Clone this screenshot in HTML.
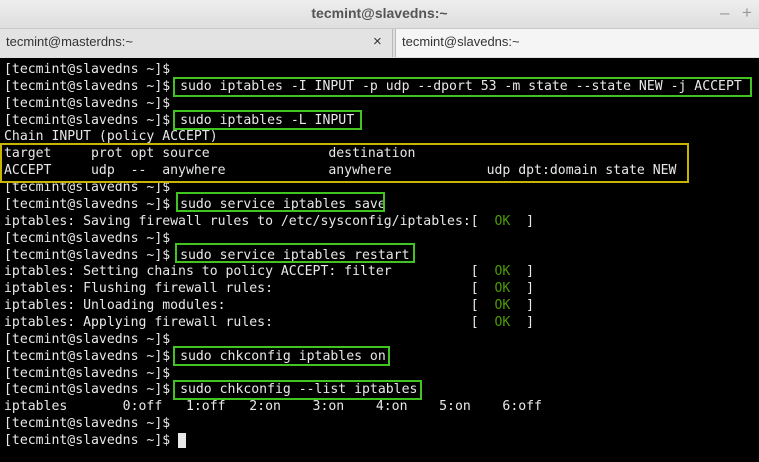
<!DOCTYPE html>
<html><head><style>
body{margin:0;width:759px;height:462px;overflow:hidden;background:#000;position:relative;font-family:"Liberation Sans",sans-serif}
#title{position:absolute;left:0;top:0;width:759px;height:28px;background:linear-gradient(#eeeeee,#dedede);border-bottom:1px solid #c8c8c8}
#title .t{position:absolute;left:0;right:0;top:5px;text-align:center;font-weight:bold;font-size:14px;color:#555}
#title .c{position:absolute;top:3px;font-size:17px;color:#999}
#tabs{position:absolute;left:0;top:29px;width:759px;height:29px;background:#e0e0e0}
.tab{position:absolute;top:0;height:28px;font-size:13px;color:#333;line-height:26px;padding-left:6px;box-sizing:border-box}
#term{position:absolute;left:0;top:58px;width:759px;height:404px;background:#000}
.l{position:absolute;left:4px;height:17px;line-height:17px;font-family:"DejaVu Sans Mono",monospace;font-size:13.15px;color:#e8e8e8;white-space:pre}
.ok{color:#4e9a06}
.c{margin-left:2px}
.b{position:absolute;border:2px solid #41c322;box-sizing:border-box}
.y{border-color:#c9b400}
</style></head><body>
<div id="title"><div class="t">tecmint@slavedns:~</div><span class="c" style="left:718px">–</span><span class="c" style="left:740px">+</span></div>
<div id="tabs">
<div class="tab" style="left:0;width:393px;background:#e3e3e3;border-right:1px solid #bbb">tecmint@masterdns:~<span style="position:absolute;left:373px;font-size:15px">×</span></div>
<div class="tab" style="left:395px;width:364px;background:#f5f5f5;border-left:1px solid #bbb">tecmint@slavedns:~</div>
</div>
<div id="term">
<div class="l" style="top:3px">[tecmint@slavedns ~]$</div>
<div class="l" style="top:19.9px">[tecmint@slavedns ~]$ <span class="c">sudo iptables -I INPUT -p udp --dport 53 -m state --state NEW -j ACCEPT</span></div>
<div class="l" style="top:36.7px">[tecmint@slavedns ~]$</div>
<div class="l" style="top:53.6px">[tecmint@slavedns ~]$ <span class="c">sudo iptables -L INPUT</span></div>
<div class="l" style="top:70.4px">Chain INPUT (policy ACCEPT)</div>
<div class="l" style="top:87.3px">target     prot opt source               destination</div>
<div class="l" style="top:104.2px">ACCEPT     udp  --  anywhere             anywhere            udp dpt:domain state NEW</div>
<div class="l" style="top:121px">[tecmint@slavedns ~]$</div>
<div class="l" style="top:137.9px">[tecmint@slavedns ~]$ <span class="c">sudo service iptables save</span></div>
<div class="l" style="top:154.7px">iptables: Saving firewall rules to /etc/sysconfig/iptables:[  <span class="ok">OK</span>  ]</div>
<div class="l" style="top:171.6px">[tecmint@slavedns ~]$</div>
<div class="l" style="top:188.5px">[tecmint@slavedns ~]$ <span class="c">sudo service iptables restart</span></div>
<div class="l" style="top:205.3px">iptables: Setting chains to policy ACCEPT: filter          [  <span class="ok">OK</span>  ]</div>
<div class="l" style="top:222.2px">iptables: Flushing firewall rules:                         [  <span class="ok">OK</span>  ]</div>
<div class="l" style="top:239px">iptables: Unloading modules:                               [  <span class="ok">OK</span>  ]</div>
<div class="l" style="top:255.9px">iptables: Applying firewall rules:                         [  <span class="ok">OK</span>  ]</div>
<div class="l" style="top:272.8px">[tecmint@slavedns ~]$</div>
<div class="l" style="top:289.6px">[tecmint@slavedns ~]$ <span class="c">sudo chkconfig iptables on</span></div>
<div class="l" style="top:306.5px">[tecmint@slavedns ~]$</div>
<div class="l" style="top:323.3px">[tecmint@slavedns ~]$ <span class="c">sudo chkconfig --list iptables</span></div>
<div class="l" style="top:340.2px">iptables       0:off   1:off   2:on    3:on    4:on    5:on    6:off</div>
<div class="l" style="top:357.1px">[tecmint@slavedns ~]$</div>
<div class="l" style="top:373.9px">[tecmint@slavedns ~]$ <span style="background:#e8e8e8"> </span></div>
<div class="b" style="left:173px;top:19px;width:579px;height:20px"></div>
<div class="b" style="left:173px;top:52px;width:189px;height:20px"></div>
<div class="b y" style="left:0;top:85px;width:689px;height:40px"></div>
<div class="b" style="left:176px;top:134px;width:209px;height:20px"></div>
<div class="b" style="left:175px;top:185px;width:240px;height:20px"></div>
<div class="b" style="left:173px;top:288px;width:217px;height:20px"></div>
<div class="b" style="left:173px;top:322px;width:249px;height:20px"></div>
</div>
</body></html>
